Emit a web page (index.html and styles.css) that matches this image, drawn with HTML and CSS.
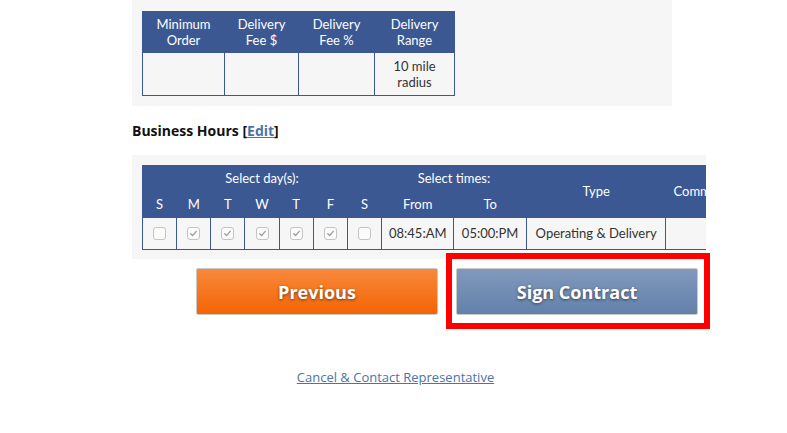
FILE: index.html
```html
<!DOCTYPE html>
<html>
<head>
<meta charset="utf-8">
<link rel="stylesheet" href="styles.css">
</head>
<body>
<div class="page">
  <div class="panel panel-top">
    <table class="grid fee-table">
      <colgroup><col class="c1"><col class="c2"><col class="c3"><col class="c4"></colgroup>
      <thead>
        <tr><th>Minimum<br>Order</th><th>Delivery<br>Fee $</th><th>Delivery<br>Fee %</th><th>Delivery<br>Range</th></tr>
      </thead>
      <tbody>
        <tr><td></td><td></td><td></td><td>10 mile<br>radius</td></tr>
      </tbody>
    </table>
  </div>

  <h3 class="section-title">Business Hours [<a href="#" class="edit">Edit</a>]</h3>

  <div class="panel panel-hours">
    <table class="grid hours-table">
      <colgroup>
        <col class="day"><col class="day"><col class="day"><col class="day"><col class="day"><col class="day"><col class="day">
        <col class="time"><col class="time"><col class="type"><col class="comm">
      </colgroup>
      <thead>
        <tr><th colspan="7">Select day(s):</th><th colspan="2">Select times:</th><th rowspan="2">Type</th><th rowspan="2" class="comm-h">Comments</th></tr>
        <tr class="sub"><th>S</th><th>M</th><th>T</th><th>W</th><th>T</th><th>F</th><th>S</th><th>From</th><th>To</th></tr>
      </thead>
      <tbody>
        <tr>
          <td><span class="cb"></span></td>
          <td><span class="cb checked"><svg viewBox="0 0 12 12"><path d="M3 6.3 L5 8.3 L9 3.6" /></svg></span></td>
          <td><span class="cb checked"><svg viewBox="0 0 12 12"><path d="M3 6.3 L5 8.3 L9 3.6" /></svg></span></td>
          <td><span class="cb checked"><svg viewBox="0 0 12 12"><path d="M3 6.3 L5 8.3 L9 3.6" /></svg></span></td>
          <td><span class="cb checked"><svg viewBox="0 0 12 12"><path d="M3 6.3 L5 8.3 L9 3.6" /></svg></span></td>
          <td><span class="cb checked"><svg viewBox="0 0 12 12"><path d="M3 6.3 L5 8.3 L9 3.6" /></svg></span></td>
          <td><span class="cb"></span></td>
          <td>08:45:AM</td>
          <td>05:00:PM</td>
          <td>Operating &amp; Delivery</td>
          <td></td>
        </tr>
      </tbody>
    </table>
  </div>

  <div class="actions">
    <button class="btn btn-prev">Previous</button>
    <button class="btn btn-sign">Sign Contract</button>
  </div>

  <div class="cancel-row">
    <a href="#" class="cancel">Cancel &amp; Contact Representative</a>
  </div>
</div>
</body>
</html>
```

FILE: styles.css
```css
html, body {
  margin: 0;
  padding: 0;
  background: #ffffff;
}
body {
  font-family: "Open Sans", "Liberation Sans", sans-serif;
  color: #333;
}
.page {
  width: 787px;
}
.panel {
  background: #f6f6f6;
  margin-left: 132px;
  box-sizing: border-box;
}
.panel-top {
  width: 540px;
  padding: 11px 10px 10px 10px;
}
.panel-hours {
  width: 574px;
  margin-top: 14px;
  padding: 10px 0 9px 10px;
  overflow: hidden;
}
.grid {
  border-collapse: collapse;
  table-layout: fixed;
  font-family: Lato, "Open Sans", sans-serif;
  font-size: 13px;
  line-height: 16px;
}
.grid th {
  background: #3b5893;
  color: #ffffff;
  font-weight: normal;
  text-align: center;
  border: 1px solid #3b5893;
}
.grid td {
  border: 1px solid #3b5893;
  text-align: center;
  color: #333;
}
.fee-table {
  width: 312px;
}
.fee-table .c1 { width: 82px; }
.fee-table .c2 { width: 74px; }
.fee-table .c3 { width: 76px; }
.fee-table .c4 { width: 80px; }
.fee-table th { padding: 4px 2px 4px; }
.fee-table td { padding: 5px 2px 5px; height: 32px; }

.section-title {
  margin: 15px 0 0 132px;
  font-size: 14px;
  line-height: 20px;
  font-weight: 700;
  color: #111;
}
.edit {
  color: #4a73ad;
  text-decoration: underline;
}

.hours-table {
  width: 613px;
}
.hours-table .day { width: 34px; }
.hours-table .time { width: 72px; }
.hours-table .type { width: 139px; }
.hours-table .comm { width: 88px; }
.hours-table th { padding: 4px 0 5px; height: 16px; white-space: nowrap; }
.hours-table th.comm-h { text-align: left; padding-left: 7px; }
.hours-table td { padding: 7px 0 8px; height: 15px; white-space: nowrap; }

.cb {
  display: inline-block;
  width: 11px;
  height: 11px;
  border: 1px solid #c4c4c4;
  border-radius: 3px;
  background: #fbfbfb;
  vertical-align: middle;
  position: relative;
  top: -1px;
}
.cb svg {
  width: 11px;
  height: 11px;
  display: block;
}
.cb svg path {
  fill: none;
  stroke: #9a9a9a;
  stroke-width: 1.4;
  stroke-linecap: round;
  stroke-linejoin: round;
}

.actions {
  display: flex;
  align-items: center;
  margin: 9px 0 0 196px;
  gap: 18px;
}
.btn {
  height: 47px;
  width: 242px;
  border: 1px solid #c9c9c9;
  border-radius: 2px;
  color: #ffffff;
  font-family: "Open Sans", "Liberation Sans", sans-serif;
  font-weight: 700;
  font-size: 18px;
  text-shadow: 0 1px 3px rgba(0, 0, 0, 0.55);
  padding: 0;
  cursor: pointer;
}
.btn-prev {
  width: 242px;
  background: linear-gradient(#f8893b, #f56405);
}
.btn-sign {
  position: relative;
  background: linear-gradient(#8199bc, #6381ab);
}
.btn-sign::after {
  content: "";
  position: absolute;
  left: -11px;
  right: -13px;
  top: -16px;
  bottom: -15px;
  border: 6px solid #ff0000;
  pointer-events: none;
}

.cancel-row {
  margin-top: 50px;
  text-align: center;
  padding-left: 4px;
}
.cancel {
  font-size: 13px;
  color: #4a73ad;
  text-decoration: underline;
}
```
